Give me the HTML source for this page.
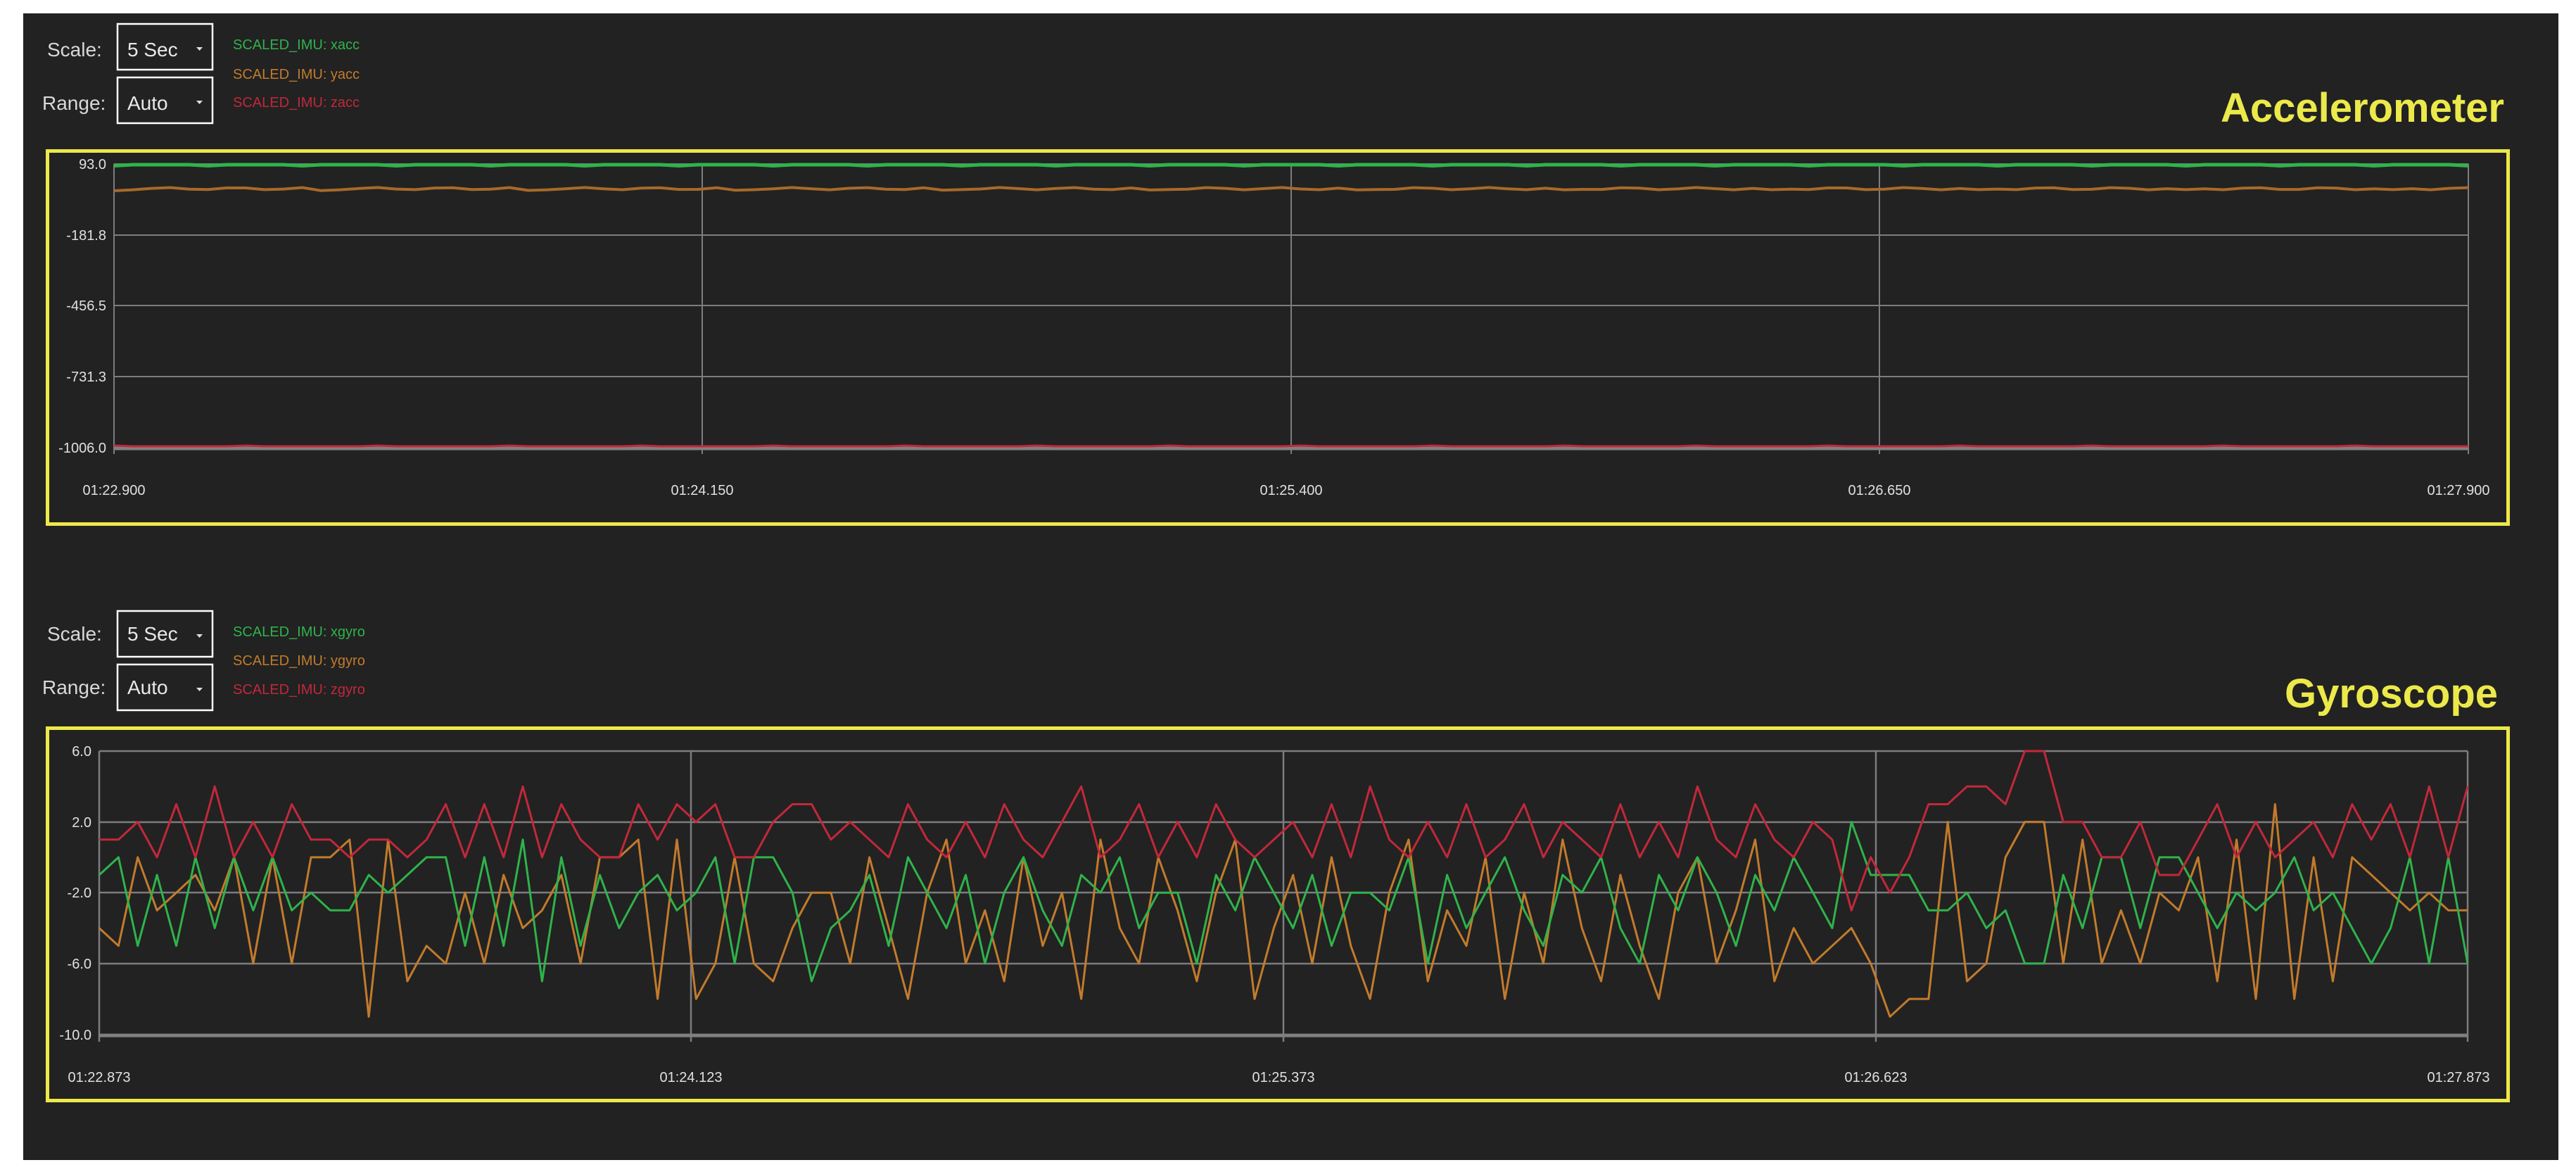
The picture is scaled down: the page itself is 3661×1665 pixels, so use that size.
<!DOCTYPE html>
<html><head><meta charset="utf-8">
<style>
html,body{margin:0;padding:0;background:#fff;width:3661px;height:1665px;overflow:hidden}
svg{display:block}
text{font-family:"Liberation Sans Narrow","Liberation Sans",sans-serif}
</style></head>
<body>
<svg id="s" width="3661" height="1665" viewBox="0 0 3661 1665" xmlns="http://www.w3.org/2000/svg">
<rect x="33" y="19" width="3603" height="1629" fill="#222222"/>

<!-- Top controls -->
<g fill="#d8d8d8" font-size="28">
<text x="67" y="80">Scale:</text>
<text x="60" y="156">Range:</text>
<text x="67" y="910">Scale:</text>
<text x="60" y="986">Range:</text>
</g>
<g fill="none" stroke="#ffffff" stroke-width="2.5">
<rect x="167" y="34" width="135" height="65"/>
<rect x="167" y="110" width="135" height="65"/>
<rect x="167" y="868" width="135" height="65"/>
<rect x="167" y="944" width="135" height="65"/>
</g>
<g fill="#e8e8e8" font-size="28">
<text x="181" y="80">5 Sec</text>
<text x="181" y="156">Auto</text>
<text x="181" y="910">5 Sec</text>
<text x="181" y="986">Auto</text>
</g>
<g fill="#e0e0e0">
<path d="M279 67h9l-4.5 5z"/><path d="M279 143h9l-4.5 5z"/>
<path d="M279 901h9l-4.5 5z"/><path d="M279 977h9l-4.5 5z"/>
</g>
<g font-size="20">
<text x="331" y="70" fill="#2fb34b">SCALED_IMU: xacc</text>
<text x="331" y="112" fill="#c27b2c">SCALED_IMU: yacc</text>
<text x="331" y="152" fill="#c2283a">SCALED_IMU: zacc</text>
<text x="331" y="904" fill="#2fb34b">SCALED_IMU: xgyro</text>
<text x="331" y="945" fill="#c27b2c">SCALED_IMU: ygyro</text>
<text x="331" y="986" fill="#c2283a">SCALED_IMU: zgyro</text>
</g>

<g fill="#ece94a" font-weight="bold" font-family="Liberation Sans, sans-serif" text-anchor="end">
<text x="3559" y="173" font-size="58">Accelerometer</text>
<text x="3550" y="1005" font-size="58">Gyroscope</text>
</g>

<!-- Yellow frames -->
<g fill="none" stroke="#ece94a" stroke-width="5">
<rect x="67.5" y="214.5" width="3497" height="530"/>
<rect x="67.5" y="1034.5" width="3497" height="529"/>
</g>

<!-- Accelerometer grid -->
<g stroke="#7d7d80" stroke-width="2">
<line x1="162" y1="334" x2="3508" y2="334"/>
<line x1="162" y1="434" x2="3508" y2="434"/>
<line x1="162" y1="535" x2="3508" y2="535"/>
<line x1="162" y1="233" x2="3508" y2="233"/>
<line x1="998" y1="233" x2="998" y2="645"/>
<line x1="1835" y1="233" x2="1835" y2="645"/>
<line x1="2671" y1="233" x2="2671" y2="645"/>
<line x1="3508" y1="233" x2="3508" y2="645"/>
<line x1="162" y1="233" x2="162" y2="645"/>
</g>
<line x1="162" y1="637" x2="3508" y2="637" stroke="#808084" stroke-width="5"/>
<g id="acc"></g>
<g fill="#e0e0e0" font-size="20" text-anchor="end">
<text x="151" y="240">93.0</text>
<text x="151" y="341">-181.8</text>
<text x="151" y="441">-456.5</text>
<text x="151" y="542">-731.3</text>
<text x="151" y="643">-1006.0</text>
</g>
<g fill="#e0e0e0" font-size="20" text-anchor="middle">
<text x="162" y="703">01:22.900</text>
<text x="998" y="703">01:24.150</text>
<text x="1835" y="703">01:25.400</text>
<text x="2671" y="703">01:26.650</text>
<text x="3494" y="703">01:27.900</text>
</g>

<!-- Gyro grid -->
<g stroke="#7d7d80" stroke-width="2.5">
<line x1="141" y1="1067" x2="3507" y2="1067"/>
<line x1="141" y1="1168" x2="3507" y2="1168"/>
<line x1="141" y1="1268" x2="3507" y2="1268"/>
<line x1="141" y1="1369" x2="3507" y2="1369"/>
<line x1="982" y1="1067" x2="982" y2="1480"/>
<line x1="1824" y1="1067" x2="1824" y2="1480"/>
<line x1="2666" y1="1067" x2="2666" y2="1480"/>
<line x1="3507" y1="1067" x2="3507" y2="1480"/>
<line x1="141" y1="1067" x2="141" y2="1480"/>
</g>
<line x1="141" y1="1471" x2="3507" y2="1471" stroke="#808084" stroke-width="5"/>
<g id="gyr"></g>
<g fill="#e0e0e0" font-size="20" text-anchor="end">
<text x="130" y="1074">6.0</text>
<text x="130" y="1175">2.0</text>
<text x="130" y="1275">-2.0</text>
<text x="130" y="1376">-6.0</text>
<text x="130" y="1477">-10.0</text>
</g>
<g fill="#e0e0e0" font-size="20" text-anchor="middle">
<text x="141" y="1537">01:22.873</text>
<text x="982" y="1537">01:24.123</text>
<text x="1824" y="1537">01:25.373</text>
<text x="2666" y="1537">01:26.623</text>
<text x="3494" y="1537">01:27.873</text>
</g>
</svg>
<script>
(function(){
var NS="http://www.w3.org/2000/svg";
function line(g,pts,col,w){var p=document.createElementNS(NS,"polyline");p.setAttribute("points",pts);p.setAttribute("fill","none");p.setAttribute("stroke",col);p.setAttribute("stroke-width",w);p.setAttribute("stroke-linejoin","round");g.appendChild(p);}
var red=[1,1,2,0,3,0,4,0,2,0,3,1,1,0,1,1,0,1,3,0,3,0,4,0,3,1,0,0,3,1,3,2,3,0,0,2,3,3,1,
2,1,0,3,1,0,2,0,3,1,0,2,4,0,1,3,0,2,0,3,1,0,1,2,0,3,0,4,1,0,2,0,3,0,1,3,0,2,1,0,3,0,2,0,4,1,0,3,1,0,2,1,
-3,0,-2,0,3,3,4,4,3,6,6,2,2,0,0,2,-1,-1,1,3,0,2,0,1,2,0,3,1,3,0,4,0,4];
var grn=[-1,0,-5,-1,-5,0,-4,0,-3,0,-3,-2,-3,-3,-1,-2,-1,0,0,-5,0,-5,1,-7,0,-5,-1,-4,-2,-1,-3,-2,0,-6,0,0,-2,-7,-4,
-3,-1,-5,0,-2,-4,-1,-6,-2,0,-3,-5,-1,-2,0,-4,-2,-2,-6,-1,-3,0,-2,-4,-1,-5,-2,-2,-3,0,-6,-1,-4,-2,0,-3,-5,-1,-2,0,-4,-6,-1,-3,0,-2,-5,-1,-3,0,-2,-4,
2,-1,-1,-1,-3,-3,-2,-4,-3,-6,-6,-1,-4,0,0,-4,0,0,-2,-4,-2,-3,-2,0,-3,-2,-4,-6,-4,0,-6,0,-6];
var org=[-4,-5,0,-3,-2,-1,-3,0,-6,0,-6,0,0,1,-9,1,-7,-5,-6,-2,-6,-1,-4,-3,-1,-6,0,0,1,-8,1,-8,-6,0,-6,-7,-4,-2,-2,
-6,0,-4,-8,-2,1,-6,-3,-7,0,-5,-2,-8,1,-4,-6,0,-3,-7,-2,1,-8,-4,-1,-6,0,-5,-8,-2,1,-7,-3,-5,0,-8,-2,-6,1,-4,-7,-1,-5,-8,-2,0,-6,-3,1,-7,-4,-6,-5,
-4,-6,-9,-8,-8,2,-7,-6,0,2,2,-6,1,-6,-3,-6,-2,-3,0,-7,1,-8,3,-8,0,-7,0,-1,-2,-3,-2,-3,-3];
var g=document.getElementById("gyr");
function pts(a){var n=a.length,s="";for(var i=0;i<n;i++){var x=141+i*3366/(n-1);var y=1067+(6-a[i])*25.15;s+=x.toFixed(1)+","+y.toFixed(1)+" ";}return s;}
line(g,pts(org),"#c27b2c",3);
line(g,pts(grn),"#2fb34b",3);
line(g,pts(red),"#c2283a",3);
var a=document.getElementById("acc");
var s1="",s2="",s3="";
for(var i=0;i<=125;i++){var x=162+i*3346/125;
s1+=x.toFixed(1)+","+(234+((i*7)%5==0?1.5:0)).toFixed(1)+" ";
s2+=x.toFixed(1)+","+(268+Math.sin(i*1.7)*1.6+((i*13)%11==0?3:0)).toFixed(1)+" ";
s3+=x.toFixed(1)+","+(634+((i*5)%7==0?-1:0)).toFixed(1)+" ";}
line(a,s3,"#c2283a",3);
line(a,s2,"#a8692a",4);
line(a,s1,"#2fb34b",5);
})();
</script>
</body></html>
